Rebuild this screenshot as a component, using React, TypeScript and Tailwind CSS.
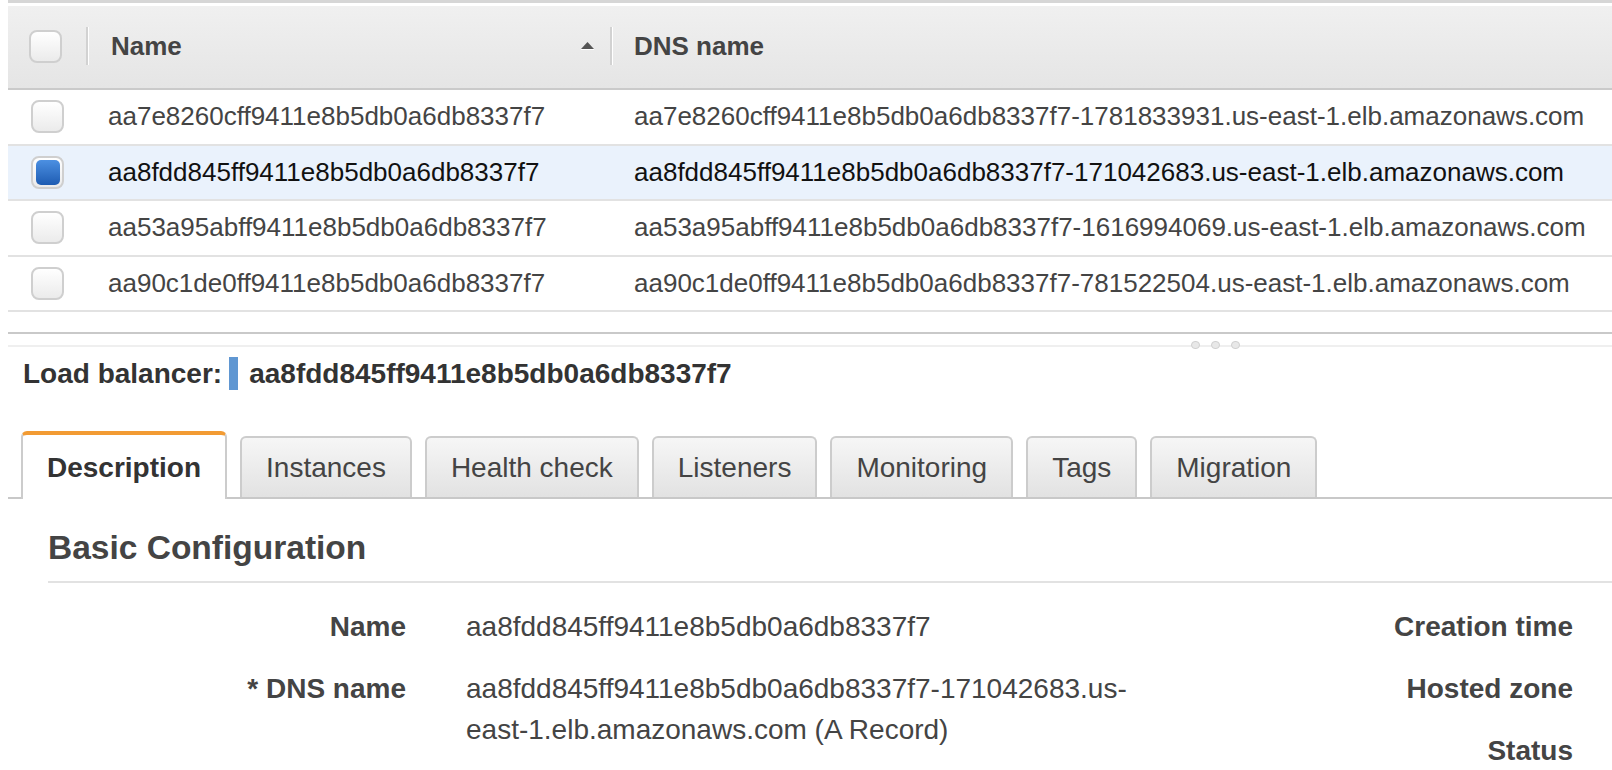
import React from 'react';

type Row = { name: string; dns: string; selected?: boolean };

const rows: Row[] = [
  { name: 'aa7e8260cff9411e8b5db0a6db8337f7', dns: 'aa7e8260cff9411e8b5db0a6db8337f7-1781833931.us-east-1.elb.amazonaws.com' },
  { name: 'aa8fdd845ff9411e8b5db0a6db8337f7', dns: 'aa8fdd845ff9411e8b5db0a6db8337f7-171042683.us-east-1.elb.amazonaws.com', selected: true },
  { name: 'aa53a95abff9411e8b5db0a6db8337f7', dns: 'aa53a95abff9411e8b5db0a6db8337f7-1616994069.us-east-1.elb.amazonaws.com' },
  { name: 'aa90c1de0ff9411e8b5db0a6db8337f7', dns: 'aa90c1de0ff9411e8b5db0a6db8337f7-781522504.us-east-1.elb.amazonaws.com' },
];

const tabs = ['Description', 'Instances', 'Health check', 'Listeners', 'Monitoring', 'Tags', 'Migration'];

const Checkbox: React.FC<{ checked?: boolean }> = ({ checked }) => (
  <div className="flex h-[33px] w-[33px] items-center justify-center rounded-[8px] border-2 border-[#cfcfcf] bg-linear-to-b from-white to-[#ebebeb]">
    {checked && <div className="h-[25px] w-[24px] rounded-[5px] bg-linear-to-b from-[#4c90e2] to-[#1e5cb2]" />}
  </div>
);

const HeaderSep = () => (
  <div className="flex h-[38px]">
    <div className="w-[2px] bg-[#d2d2d2]" />
    <div className="w-px bg-white" />
  </div>
);

export default function App() {
  return (
    <div className="h-[770px] w-[1612px] overflow-hidden bg-white font-['Liberation_Sans',Arial,sans-serif] text-[#444]">
      {/* Table */}
      <div className="pl-2">
        <div className="h-[3px] bg-[#d6d6d6]" />
        <div className="h-[3px] bg-white" />
        <div className="grid h-[84px] grid-cols-[81px_524px_1fr] items-center border-b-2 border-[#cacaca] bg-linear-to-b from-[#f0f0f0] to-[#e5e5e5] pb-[2px] text-[26px] font-bold text-[#444]">
          <div className="flex items-center justify-between pl-[21px]">
            <Checkbox />
            <HeaderSep />
          </div>
          <div className="flex items-center justify-between pl-[22px]">
            <span>Name</span>
            <div className="flex items-center gap-[16px]">
              <svg width="13" height="8" viewBox="0 0 13 8">
                <path d="M6.5 0L13 7H0z" fill="#555" />
                <path d="M0 7.5H13" stroke="#fff" strokeWidth="1" />
              </svg>
              <HeaderSep />
            </div>
          </div>
          <div className="pl-[21px]">DNS name</div>
        </div>

        {rows.map((r) => (
          <div
            key={r.name}
            className={`grid h-[55.5px] grid-cols-[81px_524px_1fr] items-center border-b-2 border-[#e2e2e2] text-[26px] ${
              r.selected ? 'bg-[#eaf2fc] text-[#111]' : 'bg-white text-[#444]'
            }`}
          >
            <div className="pl-[23px]">
              <Checkbox checked={r.selected} />
            </div>
            <div className="pl-[19px] whitespace-nowrap">{r.name}</div>
            <div className="pl-[21px] whitespace-nowrap">{r.dns}</div>
          </div>
        ))}

        {/* Split handle */}
        <div className="mt-[20px] h-[2px] bg-[#c9c9c9]" />
        <div className="relative mt-[11px] h-[2px] bg-[#efefef]">
          <div className="absolute left-[1183px] top-[-4px] flex gap-[11px]">
            <div className="h-[8px] w-[9px] rounded-full border border-[#d0d0d0] bg-[#e8e8e8]" />
            <div className="h-[8px] w-[9px] rounded-full border border-[#d0d0d0] bg-[#e8e8e8]" />
            <div className="h-[8px] w-[9px] rounded-full border border-[#d0d0d0] bg-[#e8e8e8]" />
          </div>
        </div>
      </div>

      {/* Load balancer title */}
      <div className="mt-[10px] flex h-[33px] items-center pl-[23px] text-[28px] font-bold text-[#333]">
        <span>Load balancer:</span>
        <span className="ml-[7px] h-[33px] w-[9px] bg-[#6097d2]" />
        <span className="ml-[11px]">aa8fdd845ff9411e8b5db0a6db8337f7</span>
      </div>

      {/* Tabs */}
      <div className="ml-2 mt-[41px] flex items-end gap-[13px] border-b-2 border-[#c8c8c8] pl-[13px] text-[28px]">
        {tabs.map((t, i) =>
          i === 0 ? (
            <div
              key={t}
              className="-mb-[2px] flex h-[68px] items-center rounded-t-[6px] border-x-2 border-t-4 border-x-[#cccccc] border-t-[#f29b33] bg-white px-[24px] pt-[2px] font-bold text-[#333]"
            >
              {t}
            </div>
          ) : (
            <div
              key={t}
              className="flex h-[61px] items-center rounded-t-[6px] border-x-2 border-t-2 border-[#cccccc] bg-linear-to-b from-[#f6f6f6] to-[#e2e2e2] px-[24px] text-[#444]"
            >
              {t}
            </div>
          )
        )}
      </div>

      {/* Basic configuration */}
      <div className="ml-[48px] mt-[29px] border-b-2 border-[#e2e2e2] pb-[13px] text-[33.5px] leading-[40px] font-bold text-[#444]">
        Basic Configuration
      </div>

      <div className="ml-[48px] mt-[23px] flex items-start text-[28px] leading-[41px]">
        <div className="grid grid-cols-[358px_700px] gap-x-[60px] gap-y-[21px]">
          <div className="text-right font-bold text-[#444]">Name</div>
          <div className="text-[#444]">aa8fdd845ff9411e8b5db0a6db8337f7</div>
          <div className="text-right font-bold text-[#444]">* DNS name</div>
          <div className="text-[#444]">aa8fdd845ff9411e8b5db0a6db8337f7-171042683.us-east-1.elb.amazonaws.com (A Record)</div>
        </div>
        <div className="flex w-[407px] flex-col gap-y-[21px] text-right font-bold text-[#444]">
          <div>Creation time</div>
          <div>Hosted zone</div>
          <div>Status</div>
        </div>
      </div>
    </div>
  );
}
